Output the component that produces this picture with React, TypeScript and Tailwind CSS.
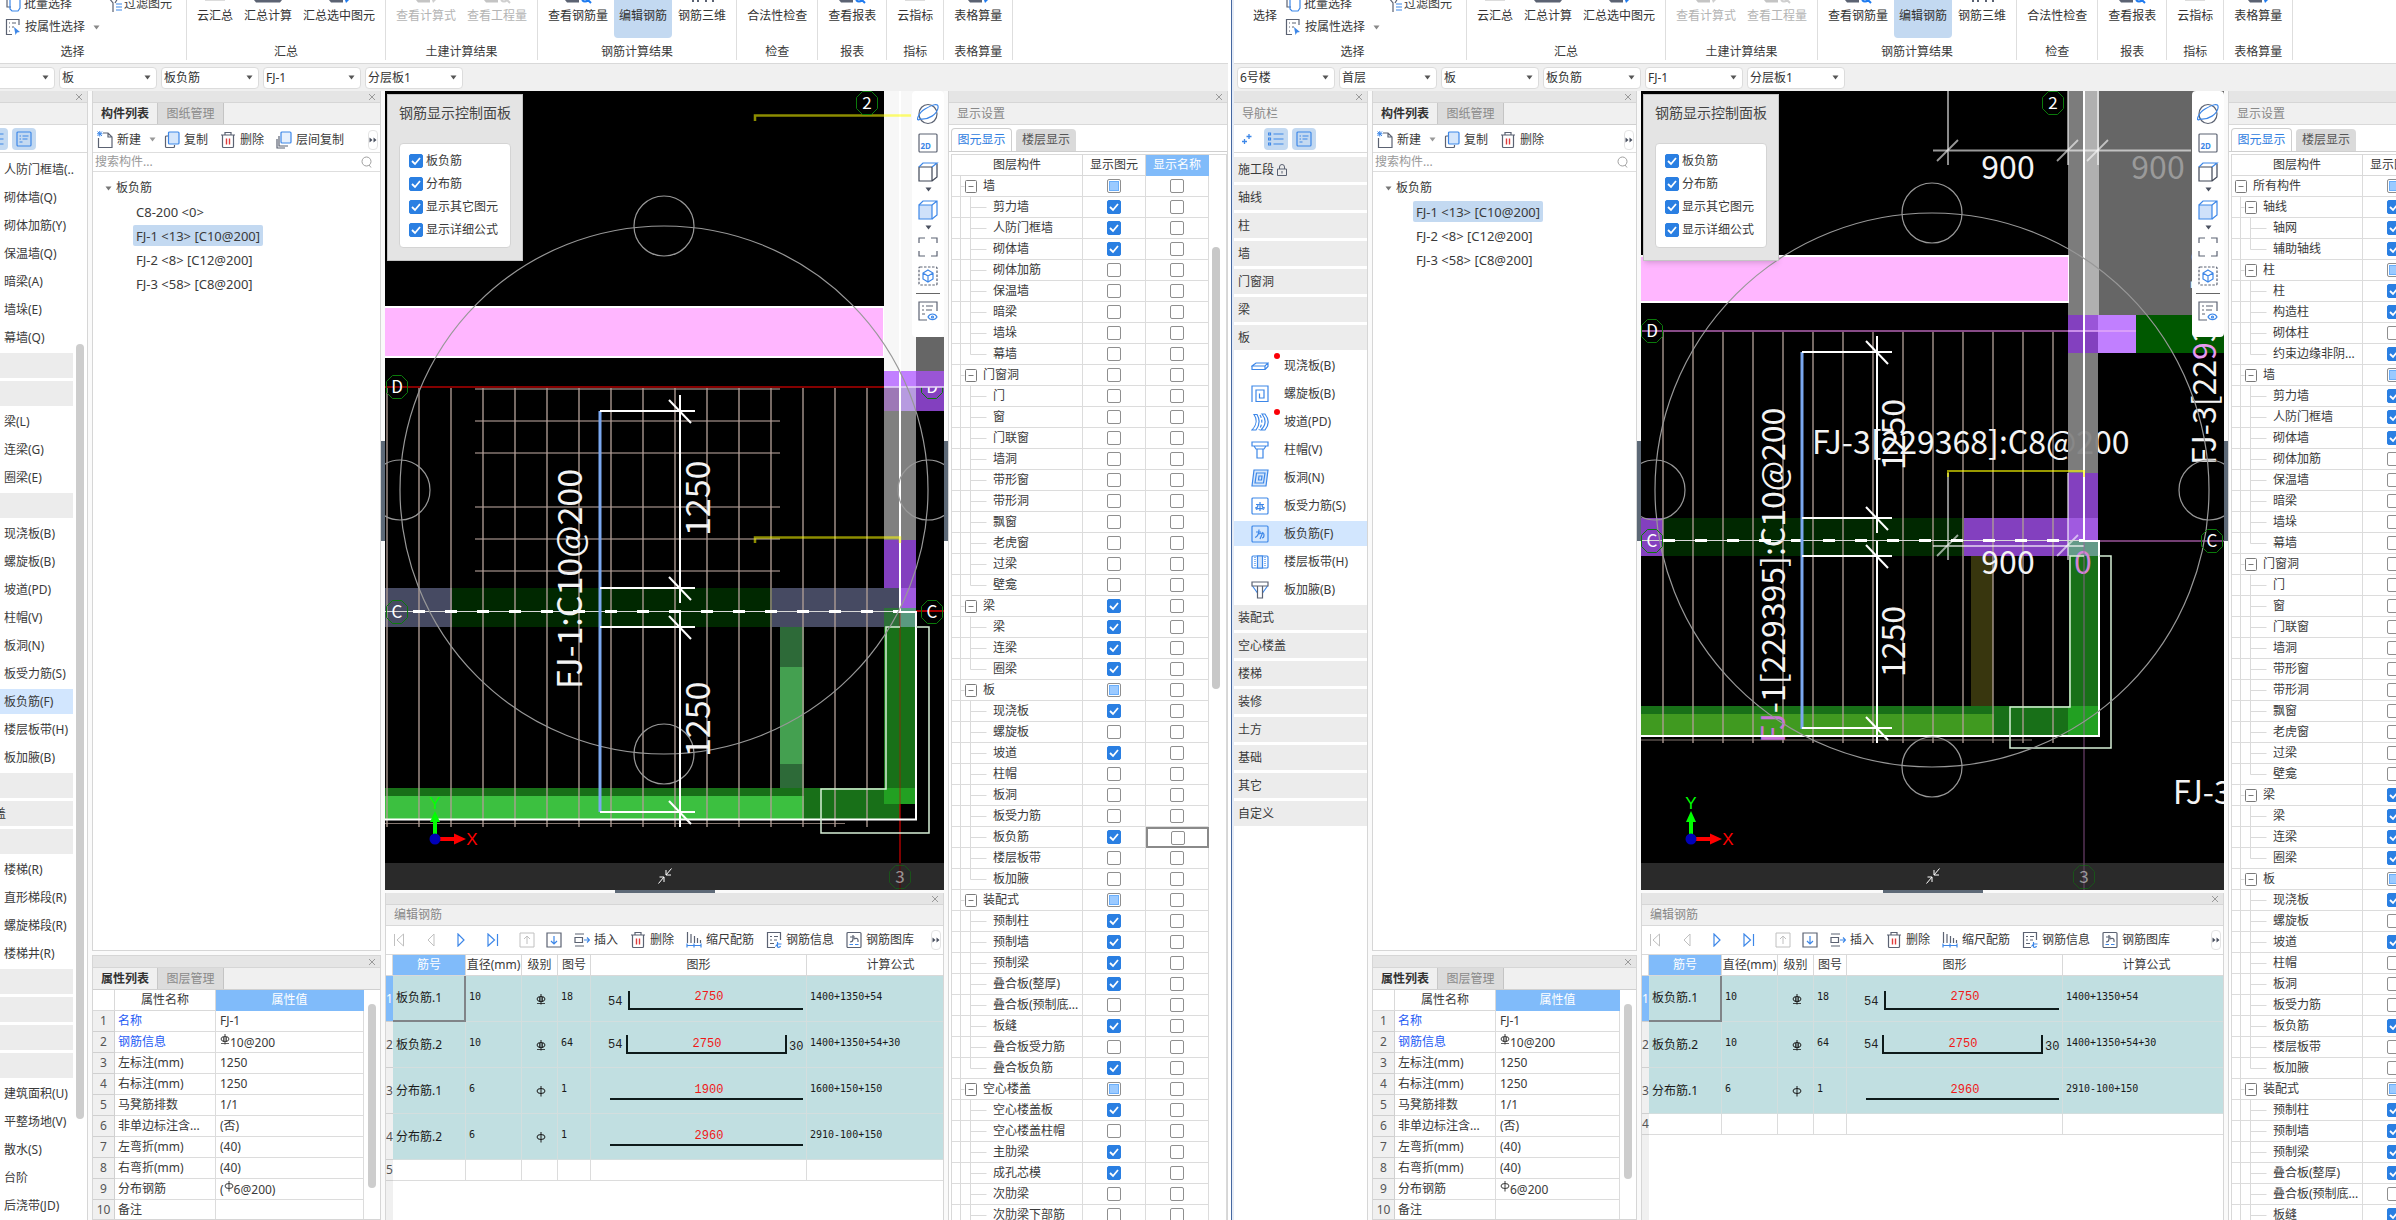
import type { ReactNode } from 'react';
import clsx from 'clsx';

type CheckState = 'on' | 'off' | 'mixed';
type Variant = 'left' | 'right';

interface LayerRow {
  name: string;
  level: 0 | 1 | 2;
  show: CheckState;
}

interface NavItem {
  label: string;
  icon?: string;
  dot?: boolean;
  active?: boolean;
  group?: boolean;
}

interface RebarRow {
  name: string;
  size: string;
  grade: 'C' | 'A';
  figure: string;
  shape: 'L' | 'U' | 'line';
  length: string;
  formula: string;
}

const BLUE = '#3d87e8';
const SLATE = '#5b6272';

const g = (name: string, show: CheckState): LayerRow => ({ name, level: 1, show });
const on = (name: string): LayerRow => ({ name, level: 2, show: 'on' });
const off = (name: string): LayerRow => ({ name, level: 2, show: 'off' });

const LAYERS: LayerRow[] = [
  { name: '所有构件', level: 0, show: 'mixed' },
  g('轴线', 'on'), on('轴网'), on('辅助轴线'),
  g('柱', 'mixed'), on('柱'), on('构造柱'), off('砌体柱'), on('约束边缘非阴...'),
  g('墙', 'mixed'), on('剪力墙'), on('人防门框墙'), on('砌体墙'), off('砌体加筋'), off('保温墙'),
  off('暗梁'), off('墙垛'), off('幕墙'),
  g('门窗洞', 'off'), off('门'), off('窗'), off('门联窗'), off('墙洞'), off('带形窗'), off('带形洞'),
  off('飘窗'), off('老虎窗'), off('过梁'), off('壁龛'),
  g('梁', 'on'), on('梁'), on('连梁'), on('圈梁'),
  g('板', 'mixed'), on('现浇板'), off('螺旋板'), on('坡道'), off('柱帽'), off('板洞'), off('板受力筋'),
  on('板负筋'), off('楼层板带'), off('板加腋'),
  g('装配式', 'mixed'), on('预制柱'), on('预制墙'), on('预制梁'), on('叠合板(整厚)'), off('叠合板(预制底...'),
  on('板缝'), off('叠合板受力筋'), on('叠合板负筋'),
  g('空心楼盖', 'mixed'), on('空心楼盖板'), off('空心楼盖柱帽'), on('主肋梁'), on('成孔芯模'), off('次肋梁'),
  off('次肋梁下部筋'),
];

const SLAB_ITEMS: NavItem[] = [
  { label: '现浇板(B)', icon: 'slab', dot: true },
  { label: '螺旋板(B)', icon: 'spiral' },
  { label: '坡道(PD)', icon: 'ramp', dot: true },
  { label: '柱帽(V)', icon: 'cap' },
  { label: '板洞(N)', icon: 'hole' },
  { label: '板受力筋(S)', icon: 'main' },
  { label: '板负筋(F)', icon: 'neg', active: true },
  { label: '楼层板带(H)', icon: 'band' },
  { label: '板加腋(B)', icon: 'haunch' },
];

const group = (label: string): NavItem => ({ label, group: true });
const item = (label: string): NavItem => ({ label });

const NAV: Record<Variant, NavItem[]> = {
  left: [
    ...['人防门框墙(..', '砌体墙(Q)', '砌体加筋(Y)', '保温墙(Q)', '暗梁(A)', '墙垛(E)', '幕墙(Q)'].map(item),
    group('门窗洞'), group('梁'),
    ...['梁(L)', '连梁(G)', '圈梁(E)'].map(item),
    group('板'),
    ...SLAB_ITEMS,
    group('装配式'), group('空心楼盖'), group('楼梯'),
    ...['楼梯(R)', '直形梯段(R)', '螺旋梯段(R)', '楼梯井(R)'].map(item),
    group('装修'), group('土方'), group('基础'), group('其它'),
    ...['建筑面积(U)', '平整场地(V)', '散水(S)', '台阶', '后浇带(JD)'].map(item),
  ],
  right: [
    ...['施工段', '轴线', '柱', '墙', '门窗洞', '梁', '板'].map(group),
    ...SLAB_ITEMS,
    ...['装配式', '空心楼盖', '楼梯', '装修', '土方', '基础', '其它', '自定义'].map(group),
  ],
};

const REBARS: Record<Variant, RebarRow[]> = {
  left: [
    { name: '板负筋.1', size: '10', grade: 'C', figure: '18', shape: 'L', length: '2750', formula: '1400+1350+54' },
    { name: '板负筋.2', size: '10', grade: 'C', figure: '64', shape: 'U', length: '2750', formula: '1400+1350+54+30' },
    { name: '分布筋.1', size: '6', grade: 'A', figure: '1', shape: 'line', length: '1900', formula: '1600+150+150' },
    { name: '分布筋.2', size: '6', grade: 'A', figure: '1', shape: 'line', length: '2960', formula: '2910-100+150' },
  ],
  right: [
    { name: '板负筋.1', size: '10', grade: 'C', figure: '18', shape: 'L', length: '2750', formula: '1400+1350+54' },
    { name: '板负筋.2', size: '10', grade: 'C', figure: '64', shape: 'U', length: '2750', formula: '1400+1350+54+30' },
    { name: '分布筋.1', size: '6', grade: 'A', figure: '1', shape: 'line', length: '2960', formula: '2910-100+150' },
  ],
};

/* ---------- small parts ---------- */

function Caret({ className }: { className?: string }) {
  return (
    <svg width="7" height="5" viewBox="0 0 7 5" className={className}>
      <path d="M0.5 0.5h6L3.5 4.5z" fill="currentColor" />
    </svg>
  );
}

function Check({ state, label }: { state: CheckState; label: string }) {
  return (
    <span className="relative inline-flex size-3.5 shrink-0">
      <input
        type="checkbox"
        aria-label={label}
        defaultChecked={state === 'on'}
        className="peer size-3.5 appearance-none rounded-xs border border-[#8f8f8f] bg-white checked:border-[#2a7fe2] checked:bg-[#2a7fe2]"
      />
      <svg viewBox="0 0 14 14" className="pointer-events-none absolute inset-0 hidden size-3.5 peer-checked:block">
        <path d="M3 7l3 3 5-6" fill="none" stroke="#fff" strokeWidth="1.8" />
      </svg>
      {state === 'mixed' && (
        <span className="pointer-events-none absolute inset-[2px] border border-[#6aaefa] bg-[#9bcaff]" />
      )}
    </span>
  );
}

function CloseBar() {
  return (
    <div className="flex h-3 shrink-0 items-center justify-end border-b border-[#d6d6d6] bg-[#e5e5e5] pr-1">
      <button type="button" aria-label="关闭">
        <svg width="8" height="8" viewBox="0 0 8 8" stroke="#9a9a9a" className="block">
          <path d="M1 1l6 6M7 1l-6 6" />
        </svg>
      </button>
    </div>
  );
}

function More() {
  return (
    <button type="button" aria-label="更多" className="flex h-5 w-2.5 items-center justify-center rounded-sm border border-[#e4e4e4]">
      <svg width="8" height="6" viewBox="0 0 8 6" fill="#4b5160" className="shrink-0">
        <path d="M0.5 0.5L3.5 3L0.5 5.5zM4.5 0.5L7.5 3L4.5 5.5z" />
      </svg>
    </button>
  );
}

function Tabs({ first, second }: { first: string; second: string }) {
  return (
    <div className="flex h-[22px] shrink-0 border-b border-[#d0d0d0] bg-[#f0f0f0]">
      <button type="button" className="w-[65px] border-r border-[#c8c8c8] font-bold text-[#333]">{first}</button>
      <button type="button" className="w-[66px] border-r border-[#c4c4c4] bg-[#dcdcdc] text-[#8a8a8a]">{second}</button>
    </div>
  );
}

function GradeMark({ grade, className }: { grade: 'C' | 'A'; className?: string }) {
  return (
    <svg width="10" height="11" viewBox="0 0 10 11" fill="none" stroke="currentColor" className={clsx('inline-block', className)}>
      <ellipse cx="5" cy="5" rx="4" ry="2.5" />
      <path d="M5 0v10.500" />
      {grade === 'C' && <path d="M3.500 3v5M6.500 3v5M1 9.500h8" strokeWidth="0.800" />}
    </svg>
  );
}

function Glyph({ name }: { name: string }) {
  const common = { width: 16, height: 18, viewBox: '0 0 16 18', fill: 'none', stroke: SLATE, strokeWidth: 1.2 };
  switch (name) {
    case 'new':
      return (
        <svg {...common}>
          <path d="M6 2h5l4 4v10.500H1.500V7M11 2v4h4" />
          <path d="M0.500 0.500l4.500 4.500M5 0.500L0.500 5M0 2.750h5.500M2.750 0v5.500" stroke={BLUE} strokeWidth="1" />
        </svg>
      );
    case 'copy':
      return (
        <svg {...common}>
          <path d="M4 5H2.500a1 1 0 0 0-1 1v9.500a1 1 0 0 0 1 1h7a1 1 0 0 0 1-1V14" />
          <rect x="4.500" y="1" width="10.500" height="12" rx="1" stroke={BLUE} fill="#d5e6fb" />
        </svg>
      );
    case 'levels':
      return (
        <svg {...common}>
          <path d="M3 5v10h9M1 8v9h8" />
          <rect x="5" y="1" width="10" height="11" rx="1" stroke={BLUE} fill="#e6f0fd" />
        </svg>
      );
    case 'trash':
      return (
        <svg {...common}>
          <path d="M1 4h14M5 4V1.500h6V4M2.500 4v11.500a1 1 0 0 0 1 1h9a1 1 0 0 0 1-1V4" />
          <path d="M6.500 7.500v6M9.500 7.500v6" stroke="#e03c3c" strokeWidth="1.400" />
        </svg>
      );
    case 'insert':
      return (
        <svg {...common}>
          <path d="M1 3h9M1 15h9M1 6.500h7.500v5H1z" />
          <path d="M10 9h5M13 6.500l2.500 2.500L13 11.500" stroke={BLUE} />
        </svg>
      );
    case 'scale':
      return (
        <svg {...common}>
          <path d="M1.500 1v11M5 3v9M8.500 5v7M11.500 7v5M14.500 9v3" />
          <path d="M1 14.500h14M1 12.500v4M8 12.500v4M15 12.500v4" stroke={BLUE} />
        </svg>
      );
    case 'info':
      return (
        <svg {...common}>
          <path d="M14.500 9V1.500h-13v15H9M4 5.500h2M8 5.500h4M4 9h2M8 9h3M4 12.500h4" />
          <path d="M15.500 13h-4M9.500 15.500l2-2.500M11.500 11v5a2 2 0 0 0 3-1" stroke={BLUE} />
        </svg>
      );
    case 'library':
      return (
        <svg {...common}>
          <rect x="1" y="1.500" width="14" height="15" rx="1" />
          <path d="M4 6h5M7 4v4c0 2-1 3-3 3M8 8c1-1 4-1 4 1v2" />
          <path d="M3.500 13.500h3.500M9 13.500h3.500" stroke={BLUE} />
        </svg>
      );
    case 'bulk':
      return (
        <svg {...common}>
          <path d="M2 3v9h4" />
          <path d="M5 2v12l2 2h6l2-3V5" stroke={BLUE} />
        </svg>
      );
    case 'attr':
      return (
        <svg {...common}>
          <path d="M14 7V1.500H1.500v15H7M4 5h1M7 5h4M4 9h1M7 9h2M4 13h1" />
          <path d="M9 9l6 5-3 0.500-1.500 2.500z" fill={BLUE} stroke="none" />
        </svg>
      );
    default:
      return (
        <svg {...common}>
          <path d="M1 3l4 5v9M10 3L7 8" />
          <path d="M8 9h6M8 12h6M8 15h6" stroke={BLUE} />
        </svg>
      );
  }
}

function NavGlyph({ name }: { name: string }) {
  const common = { width: 18, height: 18, viewBox: '0 0 18 18', fill: 'none', stroke: BLUE, strokeWidth: 1.2 };
  switch (name) {
    case 'slab':
      return (
        <svg {...common}>
          <path d="M1 9l4-3h12l-3 3zM1 9v3.500h13V9M14 12.500l3-3V6" />
        </svg>
      );
    case 'spiral':
      return (
        <svg {...common}>
          <path d="M1 17V1h16v15.500H5V5h8v8H8.500V8.500" />
        </svg>
      );
    case 'ramp':
      return (
        <svg {...common}>
          <path d="M3 1c4 5 3 11-2 16h7c5-5 5-11 1-16H6c4 5 4 11 0 16" strokeOpacity="0" />
          <path d="M3 1.500h3c3 5 3 10-1 15.500H1c5-5 5-11 2-15.500z" />
          <path d="M11 1h3c4 5 4 11 0 16h-4c5-5 5-11 1-16z" />
          <path d="M9 2c3 5 2 10-1 15" strokeDasharray="3 2" />
        </svg>
      );
    case 'cap':
      return (
        <svg {...common}>
          <path d="M1 1h16v4H1zM3 5l2 3h8l2-3M6 8v9h6V8" />
        </svg>
      );
    case 'hole':
      return (
        <svg {...common}>
          <path d="M3 1h14l-2 16H1z" fill="#d5e6fb" />
          <path d="M5.500 4h8.500l-1.500 10H4z" />
          <path d="M8 7h3l-0.500 4h-3z" />
        </svg>
      );
    case 'main':
      return (
        <svg {...common}>
          <rect x="1" y="1" width="16" height="16" rx="1" />
          <path d="M5 7.500h8M4 11c2 0 3-1 3-3M14 11c-2 0-3-1-3-3M5 12.500c2-1.500 6-1.500 8 0M9 5v9" />
        </svg>
      );
    case 'neg':
      return (
        <svg {...common}>
          <rect x="1" y="1" width="16" height="16" rx="1" />
          <path d="M5 7h5M8 4.500c0 5-1 7-4 8M8 9c2-1 5-2 5 1s-1 3-2 3M12 7l-3 7" />
        </svg>
      );
    case 'band':
      return (
        <svg {...common}>
          <rect x="1" y="3" width="16" height="12" rx="1" />
          <path d="M6.500 3h5v12h-5z" fill="#d5e6fb" />
          <path d="M4 4v10M14 4v10" strokeDasharray="1 1" />
        </svg>
      );
    default:
      return (
        <svg {...common}>
          <path d="M1.500 5l5 7M16.500 5l-5 7" fill="#d5e6fb" />
          <path d="M1 1h16v4H1zM6.500 5v12h5V5" stroke={SLATE} />
        </svg>
      );
  }
}

/* ---------- ribbon ---------- */

type Stub = 'cloud' | 'calc' | 'pick' | 'lens' | 'bars' | 'none';

// the ribbon is scrolled up, so only the feet of the big icons show
function StubIcon({ kind, muted }: { kind: Stub; muted?: boolean }) {
  const dark = muted ? '#c4c4c4' : '#5b6272';
  const blue = muted ? '#cfcfcf' : '#1f7bf0';
  return (
    <svg width="32" height="4" viewBox="0 0 32 4" fill="none">
      {kind === 'cloud' && <path d="M6 0.500h20" stroke="#dcdcdc" />}
      {kind === 'calc' && <path d="M2 0h28l-2 2.500h-24z" fill={dark} />}
      {kind === 'pick' && (
        <>
          <path d="M6 0h14v2.500H8z" fill={dark} />
          <path d="M22 0l4 0-3 3z" fill={blue} />
        </>
      )}
      {kind === 'lens' && (
        <>
          <path d="M3 0h14v2.500H5z" fill={dark} />
          <path d="M20 0c2 2 4 2 6 0l3 3" stroke={blue} strokeWidth="2" />
        </>
      )}
      {kind === 'bars' && <path d="M7 0v2M12 0v2M20 0v2M27 0v2" stroke={dark} strokeWidth="2" />}
    </svg>
  );
}

interface BigButton {
  text: string;
  stub: Stub;
  muted?: boolean;
  active?: boolean;
}

const RIBBON: { label: string; buttons: BigButton[] }[] = [
  {
    label: '汇总',
    buttons: [
      { text: '云汇总', stub: 'cloud' },
      { text: '汇总计算', stub: 'calc' },
      { text: '汇总选中图元', stub: 'pick' },
    ],
  },
  {
    label: '土建计算结果',
    buttons: [
      { text: '查看计算式', stub: 'pick', muted: true },
      { text: '查看工程量', stub: 'lens', muted: true },
    ],
  },
  {
    label: '钢筋计算结果',
    buttons: [
      { text: '查看钢筋量', stub: 'lens' },
      { text: '编辑钢筋', stub: 'none', active: true },
      { text: '钢筋三维', stub: 'bars' },
    ],
  },
  { label: '检查', buttons: [{ text: '合法性检查', stub: 'none' }] },
  { label: '报表', buttons: [{ text: '查看报表', stub: 'lens' }] },
  { label: '指标', buttons: [{ text: '云指标', stub: 'cloud' }] },
  { label: '表格算量', buttons: [{ text: '表格算量', stub: 'pick' }] },
];

function RibbonButton({ text, stub, muted, active }: BigButton) {
  return (
    <button
      type="button"
      className={clsx(
        'flex h-[38px] flex-col items-center gap-1 rounded-b-sm px-[5px]',
        muted ? 'text-[#b4b4b4]' : 'text-[#333]',
        active && 'bg-[#c3d9f1]',
      )}
    >
      <StubIcon kind={stub} muted={muted} />
      {text}
    </button>
  );
}

function Ribbon() {
  return (
    <div className="flex h-16 shrink-0 overflow-hidden border-b border-[#d9d9d9] bg-white pl-[5px] whitespace-nowrap">
      <div className="flex h-[60px] w-[228px] shrink-0 flex-col justify-between border-r border-[#dedede]">
        <div className="flex">
          <div className="w-[46px] pl-[5px]">
            <RibbonButton text="选择" stub="none" />
          </div>
          <div className="-mt-1 flex flex-col gap-[7px]">
            <div className="flex items-center">
              <button type="button" className="flex h-4 items-center gap-[3px]">
                <Glyph name="bulk" />
                批量选择
              </button>
              <button type="button" className="ml-9 flex h-4 items-center">
                <Glyph name="filter" />
                过滤图元
              </button>
            </div>
            <button type="button" className="flex h-4 items-center gap-1">
              <Glyph name="attr" />
              按属性选择
              <Caret className="ml-1 text-[#888]" />
            </button>
          </div>
        </div>
        <span className="text-center">选择</span>
      </div>
      {RIBBON.map((section) => (
        <div key={section.label} className="flex h-[60px] shrink-0 flex-col justify-between border-r border-[#dedede] px-[5px]">
          <div className="flex justify-center gap-px">
            {section.buttons.map((b) => (
              <RibbonButton key={b.text} {...b} />
            ))}
          </div>
          <span className="text-center">{section.label}</span>
        </div>
      ))}
    </div>
  );
}

function Selectors({ variant }: { variant: Variant }) {
  const values = ['首层', '板', '板负筋', 'FJ-1', '分层板1'];
  if (variant === 'right') values.unshift('6号楼');
  return (
    <div className="flex h-[27px] shrink-0 items-center gap-1 bg-[#f0f0f0] pl-[3px]">
      {values.map((value) => (
        <span key={value} className="relative flex w-[98px] shrink-0 items-center">
          <select
            aria-label={value}
            defaultValue={value}
            className="h-[22px] w-full appearance-none rounded-sm border border-[#dcdcdc] bg-white pl-0.5 text-xs text-[#333]"
          >
            <option>{value}</option>
          </select>
          <Caret className="pointer-events-none absolute right-1.5 text-[#555]" />
        </span>
      ))}
    </div>
  );
}

/* ---------- navigation ---------- */

function Navigation({ variant }: { variant: Variant }) {
  const scrolled = variant === 'left';
  return (
    <aside className="flex w-[134px] shrink-0 flex-col overflow-hidden border-r border-[#d6d6d6] bg-white">
      <CloseBar />
      <div className="flex h-[22px] shrink-0 items-center border-b border-[#d9d9d9] bg-[#f0f0f0] pl-2 text-[#888]">导航栏</div>
      <div className="flex h-7 shrink-0 items-center gap-1 border-b border-[#d9d9d9] pl-1.5">
        <button type="button" aria-label="新增" className="flex h-6 w-5 items-center pl-0.5">
          <svg width="10" height="12" viewBox="0 0 10 12" stroke={BLUE} strokeWidth="1.300">
            <path d="M2.500 6v5M0 8.500h5M7 1v5M4.500 3.500h5" />
          </svg>
        </button>
        <button type="button" aria-label="列表" className="flex h-[22px] w-6 items-center justify-center rounded-sm bg-[#c3d9f1]">
          <svg width="16" height="16" viewBox="0 0 16 16" fill="none" stroke={BLUE} strokeWidth="1.200">
            <path d="M5.500 3h10M5.500 8h10M5.500 13h10M0.500 2h2v2h-2zM0.500 7h2v2h-2zM0.500 12h2v2h-2z" />
          </svg>
        </button>
        <button type="button" aria-label="图标" className="flex h-[22px] w-6 items-center justify-center rounded-sm bg-[#c3d9f1]">
          <svg width="16" height="16" viewBox="0 0 16 16" fill="none" stroke={BLUE} strokeWidth="1.200">
            <rect x="1" y="1" width="14" height="14" rx="1" />
            <path d="M3.500 5h1.500M6.500 5h6M3.500 8h1.500M6.500 8h5M3.500 11h3" />
          </svg>
        </button>
      </div>
      <div className="flex min-h-0 flex-1 overflow-hidden pt-1">
        <nav className="flex min-w-0 flex-1 flex-col gap-[3px]">
          {NAV[variant].map((entry, i) => (
            <button
              key={i}
              type="button"
              className={clsx(
                'flex h-[25px] shrink-0 items-center text-left whitespace-nowrap text-[#3a3a3a]',
                entry.group ? 'gap-0.5 bg-[#ececec] pl-1' : 'pl-[17px]',
                entry.active && 'bg-[#d2e6fe]',
              )}
            >
              {entry.group ? (
                <>
                  {entry.label}
                  {entry.label === '施工段' && (
                    <svg width="12" height="12" viewBox="0 0 12 12" fill="none" stroke={SLATE}>
                      <path d="M1.500 5h9v6.500h-9zM3.500 5V3a2.500 2.500 0 0 1 5 0v2M6 7v2.500" />
                    </svg>
                  )}
                </>
              ) : (
                <>
                  <span className="relative flex h-[18px] w-[33px] shrink-0">
                    {entry.icon && <NavGlyph name={entry.icon} />}
                    {entry.dot && <span className="absolute -top-1 left-[23px] size-1.5 rounded-full bg-[#fb0007]" />}
                  </span>
                  {entry.label}
                </>
              )}
            </button>
          ))}
        </nav>
        {scrolled && (
          <div className="w-3.5 shrink-0 pt-[187px]">
            <div className="ml-[3px] h-[775px] w-2 rounded-full bg-[#cdcdcd]" />
          </div>
        )}
      </div>
    </aside>
  );
}

/* ---------- component list and properties ---------- */

function ComponentList({ variant }: { variant: Variant }) {
  const entries =
    variant === 'left'
      ? ['C8-200 <0>', 'FJ-1 <13> [C10@200]', 'FJ-2 <8> [C12@200]', 'FJ-3 <58> [C8@200]']
      : ['FJ-1 <13> [C10@200]', 'FJ-2 <8> [C12@200]', 'FJ-3 <58> [C8@200]'];
  return (
    <section className="flex min-h-0 flex-1 flex-col border border-t-0 border-[#d6d6d6] bg-white">
      <CloseBar />
      <Tabs first="构件列表" second="图纸管理" />
      <div className="flex h-7 shrink-0 items-center border-b border-[#dedede] pt-0.5 pr-0.5 pl-1 whitespace-nowrap">
        <button type="button" className="flex items-center gap-1">
          <Glyph name="new" />
          新建
          <Caret className="ml-1 text-[#999]" />
        </button>
        <button type="button" className="ml-2 flex items-center gap-1">
          <Glyph name="copy" />
          复制
        </button>
        <button type="button" className="ml-3 flex items-center gap-1">
          <Glyph name="trash" />
          删除
        </button>
        {variant === 'left' && (
          <button type="button" className="ml-3 flex items-center gap-1">
            <Glyph name="levels" />
            层间复制
          </button>
        )}
        <span className="flex-1" />
        <More />
      </div>
      <label className="flex h-[19px] shrink-0 items-center border-b border-[#dedede] pr-2 pl-0.5">
        <input type="search" aria-label="搜索构件" placeholder="搜索构件..." className="min-w-0 flex-1 text-xs placeholder:text-[#999]" />
        <svg width="11" height="12" viewBox="0 0 11 12" fill="none" stroke="#a0a0a0">
          <circle cx="5.500" cy="5.500" r="4.500" />
          <path d="M8 9l2 2.500" />
        </svg>
      </label>
      <div className="flex items-center gap-1 pt-2 pl-3">
        <Caret className="text-[#777]" />
        板负筋
      </div>
      <ul className="flex flex-col gap-[3px] pt-[5px] pl-10">
        {entries.map((entry) => (
          <li key={entry} className="flex">
            <button
              type="button"
              className={clsx('h-[21px] rounded-xs px-[3px] text-[13px] whitespace-nowrap', entry.startsWith('FJ-1') && 'bg-[#c3d9f1]')}
            >
              {entry}
            </button>
          </li>
        ))}
      </ul>
    </section>
  );
}

function Properties({ variant }: { variant: Variant }) {
  const rows: [string, ReactNode][] = [
    ['名称', 'FJ-1'],
    ['钢筋信息', <><GradeMark grade="C" className="align-text-top" />10@200</>],
    ['左标注(mm)', '1250'],
    ['右标注(mm)', '1250'],
    ['马凳筋排数', '1/1'],
    ['非单边标注含...', '(否)'],
    ['左弯折(mm)', '(40)'],
    ['右弯折(mm)', '(40)'],
    [
      '分布钢筋',
      variant === 'left'
        ? <>(<GradeMark grade="A" className="align-text-top" />6@200)</>
        : <><GradeMark grade="A" className="align-text-top" />6@200</>,
    ],
    ['备注', ''],
  ];
  return (
    <section className="flex h-[265px] shrink-0 flex-col overflow-hidden border border-[#d6d6d6] bg-white">
      <CloseBar />
      <Tabs first="属性列表" second="图层管理" />
      <div className="flex items-start">
        <table className="min-w-0 flex-1 table-fixed border-separate border-spacing-0">
          <colgroup>
            <col className="w-[22px]" />
            <col className="w-[101px]" />
            <col />
          </colgroup>
          <thead>
            <tr className="h-[21px]">
              <th className="border-r border-b border-[#d9d9d9] p-0" />
              <th className="border-r border-b border-[#d9d9d9] p-0 font-normal">属性名称</th>
              <th className="border-r border-b border-[#80bbfa] bg-[#80bbfa] p-0 font-normal text-white">属性值</th>
            </tr>
          </thead>
          <tbody>
            {rows.map(([name, value], i) => (
              <tr key={name} className="h-[21px]">
                <td className="border-r border-b border-[#d0d0d0] bg-[#f0f0f0] p-0 text-center text-[#555]">{i + 1}</td>
                <td className={clsx('truncate border-r border-b border-[#dcdcdc] p-0 pl-[3px]', i < 2 && 'text-[#1f5cf5]')}>{name}</td>
                <td className="border-r border-b border-[#dcdcdc] p-0 pl-1 whitespace-nowrap">{value}</td>
              </tr>
            ))}
          </tbody>
        </table>
        <div className="flex w-4 shrink-0 justify-center pt-3.5">
          <div className={clsx('w-2 rounded-full bg-[#cdcdcd]', variant === 'left' ? 'h-[184px]' : 'h-[175px]')} />
        </div>
      </div>
    </section>
  );
}

/* ---------- drawing ---------- */

function Bubble({ x, y, text, dim }: { x: number; y: number; text: string; dim?: boolean }) {
  return (
    <g opacity={dim ? 0.5 : 1}>
      <path
        d="M-4.500 -11.500h9l6 6v11l-6 6h-9l-6 -6v-11z"
        transform={`translate(${x} ${y})`}
        fill="none"
        stroke="#0b7a0b"
      />
      <text x={x} y={y + 6} textAnchor="middle" fontSize="17" fill="#fff">{text}</text>
    </g>
  );
}

function Rings({ cx, cy, r }: { cx: number; cy: number; r: number }) {
  return (
    <g fill="none" stroke="#989898" strokeWidth="1.200">
      <circle cx={cx} cy={cy} r={r} />
      <circle cx={cx} cy={cy - r} r="30" />
      <circle cx={cx} cy={cy + r} r="30" />
      <circle cx={cx - r} cy={cy} r="30" />
      <circle cx={cx + r} cy={cy} r="30" />
    </g>
  );
}

function Axes({ x }: { x: number }) {
  return (
    <g fontFamily="'Liberation Sans', sans-serif" fontSize="17">
      <path d={`M${x} 839V818`} stroke="#0f0" strokeWidth="4" />
      <path d={`M${x - 5} 822h10l-5 -11z`} fill="#0f0" />
      <path d={`M${x} 839h20`} stroke="#f00" strokeWidth="4" />
      <path d={`M${x + 19} 833.500v11l12 -5.500z`} fill="#f00" />
      <circle cx={x} cy="839" r="5.500" fill="#0000b8" />
      <text x={x} y="809" textAnchor="middle" fill="#0f0">Y</text>
      <text x={x + 37} y="845" textAnchor="middle" fill="#f00">X</text>
    </g>
  );
}

// chain of two 1250 dimensions, ticks at every extension line
function DimChain({ x, from, levels, gap }: { x: number; from: number; levels: number[]; gap: [number, number] }) {
  const [a, b, c, d] = levels;
  return (
    <g stroke="#fff" fill="none" strokeWidth="2">
      {levels.map((y) => (
        <path key={y} d={`M${from} ${y}H${x + 15}`} />
      ))}
      <path d={`M${x} ${a - 16}V${gap[0]}M${x} ${gap[1]}V${d + 15}`} />
      {[a, b, c, d].map((y) => (
        <path key={y} d={`M${x - 11} ${y - 11}L${x + 11} ${y + 12}`} />
      ))}
    </g>
  );
}

const CAD_FONT = "'Noto Sans CJK SC', 'Noto Sans', sans-serif";

function LeftScene() {
  return (
    <svg viewBox="385 91 559 799" preserveAspectRatio="xMidYMin slice" fontFamily={CAD_FONT} className="absolute inset-0 size-full">
      <rect x="385" y="91" width="559" height="799" fill="#000" />
      <rect x="385" y="306" width="499" height="52" fill="#fff" />
      <rect x="385" y="308" width="498" height="48" fill="#ffb6ff" />
      <rect x="884" y="91" width="60" height="280" fill="#f7f7f7" />
      <rect x="916" y="337" width="28" height="34" fill="#666" />
      <rect x="884" y="371" width="32" height="16" fill="#c17fff" />
      <rect x="884" y="387" width="16" height="24" fill="#9d78b6" />
      <rect x="900" y="387" width="16" height="24" fill="#b79be0" />
      <rect x="916" y="387" width="28" height="24" fill="#8340bf" />
      <Bubble x={932} y={387} text="D" />
      <rect x="916" y="371" width="28" height="16" fill="#9a55d5" />
      <rect x="884" y="411" width="32" height="129" fill="#808080" />
      <rect x="884" y="540" width="32" height="48" fill="#8340bf" />
      <path d="M385 387H884" stroke="#b00000" strokeWidth="1.500" />
      <path d="M884 387H944" stroke="#e8d8f8" strokeWidth="1.500" />

      <rect x="385" y="588" width="67" height="39" fill="#464a62" />
      <rect x="452" y="588" width="320" height="39" fill="#002800" />
      <rect x="772" y="588" width="128" height="39" fill="#464a62" />
      <rect x="900" y="588" width="16" height="20" fill="#a05ae0" />
      <rect x="884" y="608" width="16" height="19" fill="#2d7038" />
      <rect x="900" y="608" width="16" height="19" fill="#5a9a80" />
      <rect x="884" y="627" width="32" height="177" fill="#187018" />
      <rect x="780" y="627" width="24" height="40" fill="#2d6a38" />
      <rect x="780" y="667" width="24" height="97" fill="#44a050" />
      <rect x="780" y="764" width="24" height="24" fill="#2d6a38" />
      <rect x="385" y="788" width="515" height="31" fill="#187018" />
      <rect x="385" y="796" width="419" height="23" fill="#3cc040" />
      <rect x="884" y="788" width="32" height="16" fill="#22a022" />

      <g stroke="#b09e95" strokeOpacity="0.750" strokeWidth="1.800">
        {Array.from({ length: 16 }, (_, i) => (
          <path key={i} d={`M${387 + 32 * i} 388V827`} />
        ))}
        {[389, 421, 453, 507, 539, 571].map((y) => (
          <path key={y} d={`M475 ${y}H780`} strokeWidth="1.500" />
        ))}
        <path d="M385 823.500H845" strokeWidth="1.200" />
      </g>

      <path d="M900 91V611" stroke="#fff" strokeWidth="2" />
      <path d="M900 611V867" stroke="#d00000" strokeOpacity="0.600" />
      <path d="M900 804V867" stroke="#c00000" />
      <path d="M916 611H944" stroke="#e00000" strokeWidth="1.500" />
      <path d="M385 611.500H900" stroke="#d8d8d8" strokeWidth="1.200" />
      <path d="M413 611.500H900" stroke="#fff" strokeWidth="3" strokeDasharray="12 20" />
      <path d="M385 819.500H916V612H900" fill="none" stroke="#fff" strokeWidth="2" />
      <path d="M916 627H929V833H821V789H886V627H900" fill="none" stroke="#d6f0d6" strokeWidth="1.500" />
      <Rings cx={664} cy={490} r={264} />
      <path d="M755 121V115.500H911M755 543V537.500H900V543" fill="none" stroke="#ffff00" strokeOpacity="0.550" strokeWidth="2.500" />
      <path d="M600 411V812" stroke="#7ba8f0" strokeWidth="3" />
      <DimChain x={680} from={600} levels={[411, 588, 627, 812]} gap={[603, 611]} />
      <g fontSize="34" fill="#f4f4f4">
        <text transform="translate(582 689) rotate(-90)">FJ-1:C10@200</text>
        <text transform="translate(710 536) rotate(-90)">1250</text>
        <text transform="translate(710 757) rotate(-90)">1250</text>
      </g>
      <Bubble x={397} y={387} text="D" />
      <Bubble x={397} y={612} text="C" />
      <Bubble x={867} y={103} text="2" />
      <Bubble x={932} y={612} text="C" />
      <Axes x={435} />
      <rect x="385" y="863" width="559" height="27" fill="#2a2a2a" />
      <path d="M900 863V890" stroke="#600" />
      <Bubble x={900} y={877} text="3" dim />
    </svg>
  );
}

function RightScene() {
  return (
    <svg viewBox="1641 91 583 799" preserveAspectRatio="xMidYMin slice" fontFamily={CAD_FONT} className="absolute inset-0 size-full">
      <rect x="1641" y="91" width="583" height="799" fill="#000" />
      <rect x="2098" y="91" width="126" height="225" fill="#666" />
      <rect x="2068" y="91" width="16" height="225" fill="#7c7c7c" />
      <rect x="2084" y="91" width="15" height="225" fill="#b0b0b0" />
      <rect x="1641" y="255" width="428" height="48" fill="#fff" />
      <rect x="1641" y="257" width="427" height="44" fill="#ffb6ff" />
      <rect x="2068" y="315" width="16" height="38" fill="#8340bf" />
      <rect x="2084" y="315" width="14" height="16" fill="#9a55d8" />
      <rect x="2084" y="331" width="14" height="22" fill="#8340bf" />
      <rect x="2098" y="315" width="38" height="38" fill="#c17fff" />
      <rect x="2136" y="315" width="88" height="38" fill="#005800" />
      <rect x="2068" y="353" width="30" height="120" fill="#7c7c7c" />
      <path d="M1641 331H2068" stroke="#b565b5" strokeWidth="1.500" />
      <path d="M2068 331H2136" stroke="#e0a8f8" strokeWidth="1.500" />

      <rect x="2068" y="473" width="30" height="45" fill="#8340bf" />
      <rect x="1641" y="518" width="22" height="38" fill="#8340bf" />
      <rect x="1663" y="518" width="301" height="38" fill="#002800" />
      <rect x="1964" y="518" width="104" height="38" fill="#8340bf" />
      <rect x="2068" y="518" width="30" height="23" fill="#a05ae0" />
      <rect x="2068" y="541" width="30" height="15" fill="#649a88" />
      <rect x="2069" y="556" width="29" height="150" fill="#187018" />
      <rect x="1971" y="556" width="22" height="150" fill="#38360e" />
      <rect x="1641" y="706" width="428" height="30" fill="#187018" />
      <rect x="1641" y="714" width="353" height="22" fill="#409a20" />
      <rect x="2068" y="706" width="30" height="30" fill="#22a022" />

      <g stroke="#b09e95" strokeOpacity="0.750" strokeWidth="1.800">
        {Array.from({ length: 14 }, (_, i) => (
          <path key={i} d={`M${1663 + 30 * i} 332V743`} />
        ))}
        <path d="M1641 740H2032" strokeWidth="1.200" />
      </g>

      <g fontSize="32" fill="#f4f4f4">
        <text transform="translate(1785 743) rotate(-90)">
          <tspan fill="#c774d8">FJ</tspan>-1[229395]:C10@200
        </text>
        <text transform="translate(1905 470) rotate(-90)">1250</text>
        <text transform="translate(1905 677) rotate(-90)">1250</text>
        <text x="1812" y="454">FJ-3[229368]:C8@200</text>
        <text transform="translate(2216 465) rotate(-90)">
          FJ-3[22<tspan fill="#e79af0">9</tspan>368]:C8@200
        </text>
        <text x="2173" y="804">FJ-3[229370]</text>
        <text x="2008" y="179" textAnchor="middle">900</text>
        <text x="2158" y="179" textAnchor="middle" fill="#9a9a9a">900</text>
        <text x="2008" y="574" textAnchor="middle">900</text>
        <text x="2083" y="574" textAnchor="middle" fill="#d184d6">0</text>
      </g>
      <rect x="2068" y="425" width="30" height="38" fill="#7c7c7c" fillOpacity="0.900" />

      <g fill="none" stroke="#fff" strokeOpacity="0.600" strokeWidth="1.800">
        <path d="M1948 91V165M1933 150.500H2191M2068 91V165M2098 91V165" />
        <path d="M1948 473V560M1933 546H2084M2068 473V560" />
        {[1948, 2068, 2098].map((x) => (
          <path key={x} d={`M${x - 11} 161l21 -21`} />
        ))}
        {[1948, 2068].map((x) => (
          <path key={x} d={`M${x - 11} 556l21 -21`} />
        ))}
      </g>
      <path d="M2084 91V541" stroke="#fff" strokeWidth="2" />
      <path d="M2084 541V890" stroke="#a060a0" strokeOpacity="0.800" />
      <path d="M2098 541H2224" stroke="#9a559a" strokeWidth="1.500" />
      <path d="M1641 540.500H2084" stroke="#d8d8d8" strokeWidth="1.200" />
      <path d="M1663 540.500H2084" stroke="#fff" strokeWidth="3" strokeDasharray="12 20" />
      <path d="M1641 736H2099V541H2084" fill="none" stroke="#fff" strokeWidth="2" />
      <path d="M2099 556H2111V748H2010V707H2070V556H2084" fill="none" stroke="#d6f0d6" strokeWidth="1.500" />
      <Rings cx={1932} cy={490} r={277} />
      <path d="M1948 477V471H2084V477" fill="none" stroke="#ffff00" strokeOpacity="0.600" strokeWidth="2" />
      <path d="M1802 352V729" stroke="#7ba8f0" strokeWidth="3" />
      <DimChain x={1877} from={1802} levels={[352, 518, 556, 728]} gap={[533, 541]} />
      <Bubble x={1652} y={331} text="D" />
      <Bubble x={1652} y={541} text="C" />
      <Bubble x={2053} y={103} text="2" />
      <Bubble x={2212} y={541} text="C" />
      <Axes x={1691} />
      <rect x="1641" y="863" width="583" height="27" fill="#2a2a2a" />
      <path d="M2084 863V890" stroke="#6a446a" />
      <Bubble x={2084} y={877} text="3" dim />
    </svg>
  );
}

function ViewTools() {
  const s = { width: 22, height: 22, viewBox: '0 0 22 22', fill: 'none', stroke: SLATE, strokeWidth: 1.2 };
  return (
    <div className="absolute top-0 right-0 flex h-[246px] w-8 flex-col items-center rounded-sm bg-white pt-3">
      <button type="button" aria-label="动态观察">
        <svg {...s}>
          <ellipse cx="11" cy="11" rx="9" ry="9.500" />
          <path d="M3 16C-2 20 1 10 8 6s14-7 13-1S12 17 3 16z" stroke={BLUE} />
        </svg>
      </button>
      <button type="button" aria-label="二维" className="mt-[7px]">
        <svg {...s}>
          <rect x="2" y="2" width="18" height="18" rx="1" />
          <text x="3.500" y="17" fontSize="8" fontWeight="bold" stroke="none" fill={BLUE}>2D</text>
        </svg>
      </button>
      <button type="button" aria-label="三维" className="mt-[7px] flex flex-col items-center gap-1">
        <svg {...s} stroke="#3f4656">
          <path d="M2 6h13v14H2zM15 20l5-4V2.500" />
          <path d="M2 6l4-4h14l-5 4" stroke={BLUE} />
        </svg>
        <Caret className="text-[#4b5160]" />
      </button>
      <button type="button" aria-label="实体" className="mt-[7px] flex flex-col items-center gap-1">
        <svg {...s} stroke={BLUE}>
          <path d="M2 6h13v14H2z" fill="#cfe1fa" />
          <path d="M2 6l4-4h14v14l-5 4M15 6l5-4" />
        </svg>
        <Caret className="text-[#4b5160]" />
      </button>
      <button type="button" aria-label="全屏" className="mt-1.5">
        <svg {...s}>
          <path d="M2 7V2h6M14 2h6v5M20 15v5h-6M8 20H2v-5" />
        </svg>
      </button>
      <button type="button" aria-label="局部三维" className="mt-[7px]">
        <svg {...s}>
          <rect x="2" y="2" width="18" height="18" rx="1" strokeDasharray="2.500 1.500" />
          <path d="M11 5l5 3v6l-5 3-5-3V8zM6 8l5 3 5-3M11 11v6" stroke={BLUE} />
        </svg>
      </button>
      <hr className="mt-1.5 w-6 border-[#666]" />
      <button type="button" aria-label="显示设置" className="mt-1.5">
        <svg {...s}>
          <path d="M20 11V2H2v18h8M5 6h2M9 6h7M5 10h2M9 10h6M5 14h3" />
          <path d="M11 17c2-4 7-4 9 0-2 3.500-7 3.500-9 0z" stroke={BLUE} />
          <circle cx="15.500" cy="17" r="1" stroke={BLUE} />
        </svg>
      </button>
    </div>
  );
}

function Canvas({ variant }: { variant: Variant }) {
  return (
    <div className="relative h-[799px] shrink-0 bg-black">
      <div className="absolute inset-0 overflow-hidden">
        {variant === 'left' ? <LeftScene /> : <RightScene />}
      </div>
      <fieldset className="absolute top-[3px] left-0.5 h-[167px] w-[135px] border border-[#c4c4c4] bg-[#e4e4e4] px-[11px] pt-2 shadow-md">
        <h2 className="text-sm leading-5 whitespace-nowrap text-[#444]">钢筋显示控制面板</h2>
        <div className="mt-5 flex h-[105px] flex-col justify-center gap-[7px] rounded-sm border border-[#d4d4d4] bg-white pl-[9px]">
          {['板负筋', '分布筋', '显示其它图元', '显示详细公式'].map((text) => (
            <label key={text} className="flex items-center gap-[3px] whitespace-nowrap">
              <Check state="on" label={text} />
              {text}
            </label>
          ))}
        </div>
      </fieldset>
      <ViewTools />
      <svg width="14" height="16" viewBox="0 0 14 16" fill="none" stroke="#fff" className="absolute bottom-1.5 left-1/2 -translate-x-1/2">
        <path d="M0.500 15.500L6 9M6 9H1.500M6 9v5M13.500 0.500L8 7M8 7h5M8 7V2" />
      </svg>
      <div className="absolute top-[350px] -left-1 h-[100px] w-1 bg-[#5d6977]" />
      <div className="absolute top-[350px] -right-1 h-[100px] w-1 bg-[#5d6977]" />
      <div className="absolute -bottom-[3px] left-1/2 h-[3px] w-[100px] -translate-x-1/2 bg-[#5d6977]" />
    </div>
  );
}

/* ---------- rebar editor ---------- */

function ShapeDrawing({ shape, length }: { shape: RebarRow['shape']; length: string }) {
  return (
    <svg width="215" height="45" viewBox="0 0 215 45" className="block" fontFamily="'Liberation Mono', monospace" fontSize="12">
      {shape === 'L' && <path d="M38 15V33H212" fill="none" stroke="#0d1a1a" strokeWidth="2" />}
      {shape === 'U' && <path d="M36 13V31H195V13" fill="none" stroke="#0d1a1a" strokeWidth="2" />}
      {shape === 'line' && <path d="M19 31H212" stroke="#0d1a1a" strokeWidth="2" />}
      {shape !== 'line' && <text x="17" y={shape === 'L' ? 29 : 26} fill="#222">54</text>}
      {shape === 'U' && <text x="198" y="28" fill="#222">30</text>}
      <text x={shape === 'U' ? 116 : 118} y={shape === 'L' ? 24 : 25} textAnchor="middle" fill="#f01818">{length}</text>
    </svg>
  );
}

const EDIT_TOOLS = [
  ['insert', '插入'],
  ['trash', '删除'],
  ['scale', '缩尺配筋'],
  ['info', '钢筋信息'],
  ['library', '钢筋图库'],
];

function RebarEditor({ variant }: { variant: Variant }) {
  const rows = REBARS[variant];
  const cell = 'border-r border-b border-[#d3dede] bg-[#c1dfe1] p-0 pb-1 pl-[3px]';
  const mono = "[font-family:'DejaVu_Sans_Mono',monospace] text-[10px]";
  return (
    <section className="mt-[3px] flex min-h-0 flex-1 flex-col overflow-hidden border-x border-[#d6d6d6] bg-white">
      <CloseBar />
      <div className="flex h-[21px] shrink-0 items-center border-b border-[#d9d9d9] bg-[#f0f0f0] pl-2 text-[#888]">编辑钢筋</div>
      <div className="flex h-7 shrink-0 items-center pr-0.5 pl-[7px] whitespace-nowrap">
        <div className="flex shrink-0 items-center gap-[22px]">
          <button type="button" aria-label="第一条">
            <svg width="12" height="14" viewBox="0 0 12 14" fill="none" stroke="#c0c0c0">
              <path d="M1.500 1v12M10.500 1v12L4 7z" />
            </svg>
          </button>
          <button type="button" aria-label="上一条">
            <svg width="8" height="14" viewBox="0 0 8 14" fill="none" stroke="#c0c0c0">
              <path d="M7 1v12L1 7z" />
            </svg>
          </button>
          <button type="button" aria-label="下一条">
            <svg width="8" height="14" viewBox="0 0 8 14" fill="none" stroke={BLUE} strokeWidth="1.200">
              <path d="M1 1v12l6-6z" />
            </svg>
          </button>
          <button type="button" aria-label="最后一条">
            <svg width="12" height="14" viewBox="0 0 12 14" fill="none" stroke={BLUE} strokeWidth="1.200">
              <path d="M10.500 1v12M1 1v12l6.500-6z" />
            </svg>
          </button>
        </div>
        <div className="ml-5 flex shrink-0 items-center gap-[11px]">
          <button type="button" aria-label="上移">
            <svg width="16" height="16" viewBox="0 0 16 16" fill="none" stroke="#c0c0c0">
              <path d="M1 1h14v14H1zM8 12V4.500M5 7l3-3 3 3" />
            </svg>
          </button>
          <button type="button" aria-label="下移">
            <svg width="16" height="16" viewBox="0 0 16 16" fill="none" stroke={SLATE} strokeWidth="1.200">
              <path d="M1 1h14v14H1z" />
              <path d="M8 4v7.500M5 9l3 3 3-3" stroke={BLUE} />
            </svg>
          </button>
        </div>
        {EDIT_TOOLS.map(([icon, text]) => (
          <button key={icon} type="button" className="flex items-center gap-1 pl-3">
            <Glyph name={icon} />
            {text}
          </button>
        ))}
        <span className="flex-1" />
        <More />
      </div>
      <table className="w-[589px] table-fixed border-separate border-spacing-0 border-t border-[#d9d9d9]">
        <colgroup>
          <col className="w-[7px]" />
          <col className="w-[73px]" />
          <col className="w-[56px]" />
          <col className="w-[36px]" />
          <col className="w-[33px]" />
          <col className="w-[216px]" />
          <col className="w-[168px]" />
        </colgroup>
        <thead>
          <tr className="h-[21px]">
            {['', '筋号', '直径(mm)', '级别', '图号', '图形', '计算公式'].map((text, i) => (
              <th
                key={i}
                className={clsx(
                  'border-r border-b border-[#d9d9d9] p-0 font-normal whitespace-nowrap',
                  i === 1 ? 'bg-[#80bbfa] text-white' : 'bg-white',
                )}
              >
                {text}
              </th>
            ))}
          </tr>
        </thead>
        <tbody>
          {rows.map((row, i) => (
            <tr key={row.name} className="h-[46px] text-[#1a1a1a]">
              <td className={clsx('border-b border-[#d0d0d0] p-0 text-center', i === 0 ? 'bg-[#80bbfa] text-white' : 'bg-[#f0f0f0] text-[#555]')}>
                {i + 1}
              </td>
              <td
                className={clsx(
                  'bg-[#c1dfe1] p-0 pl-[3px] whitespace-nowrap',
                  i === 0 ? 'border-r-2 border-b-2 border-[#808488]' : 'border-r border-b border-[#d3dede]',
                )}
              >
                {row.name}
              </td>
              <td className={clsx(cell, mono)}>{row.size}</td>
              <td className={clsx(cell, 'pt-1 text-center')}><GradeMark grade={row.grade} /></td>
              <td className={clsx(cell, mono)}>{row.figure}</td>
              <td className="border-r border-b border-[#d3dede] bg-[#c1dfe1] p-0">
                <ShapeDrawing shape={row.shape} length={row.length} />
              </td>
              <td className={clsx(cell, mono)}>{row.formula}</td>
            </tr>
          ))}
          <tr className="h-[21px]">
            <td className="border-b border-[#d0d0d0] bg-[#f0f0f0] p-0 text-center text-[#555]">{rows.length + 1}</td>
            {Array.from({ length: 6 }, (_, i) => (
              <td key={i} className="border-r border-b border-[#dcdcdc] p-0" />
            ))}
          </tr>
        </tbody>
      </table>
      <div className="w-[7px] flex-1 bg-[#f0f0f0]" />
    </section>
  );
}

/* ---------- display settings ---------- */

function TreeGuides({ row, last }: { row: LayerRow; last: boolean }) {
  if (row.level === 0) return <span className="w-[3px] shrink-0" />;
  if (row.level === 1) {
    return (
      <svg width="13" height="20" viewBox="0 0 13 20" stroke="#dadada" className="shrink-0">
        <path d="M8.500 0v20M8.500 10.500h4" />
      </svg>
    );
  }
  return (
    <svg width="41" height="20" viewBox="0 0 41 20" stroke="#dadada" className="shrink-0">
      <path d={last ? 'M8.500 0v20M18.500 0v10.500M18.500 10.500h16' : 'M8.500 0v20M18.500 0v20M18.500 10.500h16'} />
    </svg>
  );
}

function DisplaySettings({ variant }: { variant: Variant }) {
  const rows = variant === 'left' ? LAYERS.slice(9) : LAYERS;
  return (
    <aside className="flex w-[280px] shrink-0 flex-col overflow-hidden border-x border-[#d6d6d6] bg-white">
      <CloseBar />
      <div className="flex h-[22px] shrink-0 items-center border-b border-[#d9d9d9] bg-[#f0f0f0] pl-2 text-[#888]">显示设置</div>
      <div className="flex h-[27px] shrink-0 items-end gap-1 border-b border-[#cfcfcf] pl-0.5">
        <button type="button" className="h-[23px] w-[61px] rounded-t-sm border border-b-0 border-[#cfcfcf] bg-white text-[#2f7de0]">图元显示</button>
        <button type="button" className="h-[22px] w-[60px] rounded-t-sm bg-[#dadada] text-[#555]">楼层显示</button>
      </div>
      <div className="flex min-h-0 flex-1 items-start pt-0.5 pl-0.5">
        <table className="w-[258px] shrink-0 table-fixed border-separate border-spacing-0 border-t border-l border-[#d9d9d9]">
          <colgroup>
            <col className="w-[131px]" />
            <col className="w-[63px]" />
            <col className="w-[63px]" />
          </colgroup>
          <thead>
            <tr className="h-[21px]">
              <th className="border-r border-b border-[#d9d9d9] p-0 font-normal">图层构件</th>
              <th className="border-r border-b border-[#d9d9d9] p-0 font-normal">显示图元</th>
              <th className="border-r border-b border-[#80bbfa] bg-[#80bbfa] p-0 font-normal text-white">显示名称</th>
            </tr>
          </thead>
          <tbody>
            {rows.map((row, i) => (
              <tr key={i} className="h-[21px]">
                <td className="border-r border-b border-[#dcdcdc] p-0">
                  <div className="flex h-5 items-center whitespace-nowrap">
                    <TreeGuides row={row} last={rows[i + 1]?.level === 1} />
                    {row.level < 2 && (
                      <button type="button" aria-label={`收起${row.name}`} className="mr-1.5 shrink-0">
                        <svg width="12" height="13" viewBox="0 0 12 13" fill="#fff" stroke="#7a7a7a">
                          <rect x="0.500" y="0.500" width="11" height="12" rx="1" />
                          <path d="M3.500 6.500h5" />
                        </svg>
                      </button>
                    )}
                    {row.name}
                  </div>
                </td>
                <td className="border-r border-b border-[#dcdcdc] p-0">
                  <div className="flex justify-center"><Check state={row.show} label={`${row.name} 显示图元`} /></div>
                </td>
                <td
                  className={clsx(
                    'p-0',
                    variant === 'left' && row.name === '板负筋' ? 'border-2 border-[#8a8a8a]' : 'border-r border-b border-[#dcdcdc]',
                  )}
                >
                  <div className="flex justify-center"><Check state="off" label={`${row.name} 显示名称`} /></div>
                </td>
              </tr>
            ))}
          </tbody>
        </table>
        <div className="flex h-full flex-1 justify-start border-t border-r border-[#d9d9d9] pt-[92px] pl-[3px]">
          <div className="h-[442px] w-2 rounded-full bg-[#c8c8c8]" />
        </div>
      </div>
    </aside>
  );
}

/* ---------- windows ---------- */

function ModelWindow({ variant }: { variant: Variant }) {
  return (
    <div
      className={clsx(
        'flex h-full flex-col',
        variant === 'left' ? '-ml-[46px] pr-[3px]' : '-mr-[112px]',
      )}
    >
      <Ribbon />
      <Selectors variant={variant} />
      <div className="flex min-h-0 flex-1 gap-1 bg-[#fafafa]">
        <Navigation variant={variant} />
        <div className={clsx('flex shrink-0 flex-col gap-1', variant === 'left' ? 'w-[289px]' : 'w-[265px]')}>
          <ComponentList variant={variant} />
          <Properties variant={variant} />
        </div>
        <main className="flex min-w-0 flex-1 flex-col">
          <Canvas variant={variant} />
          <RebarEditor variant={variant} />
        </main>
        <DisplaySettings variant={variant} />
      </div>
    </div>
  );
}

export default function App() {
  return (
    <div className="grid h-screen grid-cols-[1231fr_1165fr] overflow-hidden bg-white text-xs leading-4 text-[#3a3a3a] [font-family:'Noto_Sans','Noto_Sans_CJK_SC',sans-serif]">
      <div className="min-w-0 overflow-hidden">
        <ModelWindow variant="left" />
      </div>
      <div className="min-w-0 overflow-hidden border-l border-[#4668a0] bg-[#e6ecf6] pl-0.5">
        <ModelWindow variant="right" />
      </div>
    </div>
  );
}
